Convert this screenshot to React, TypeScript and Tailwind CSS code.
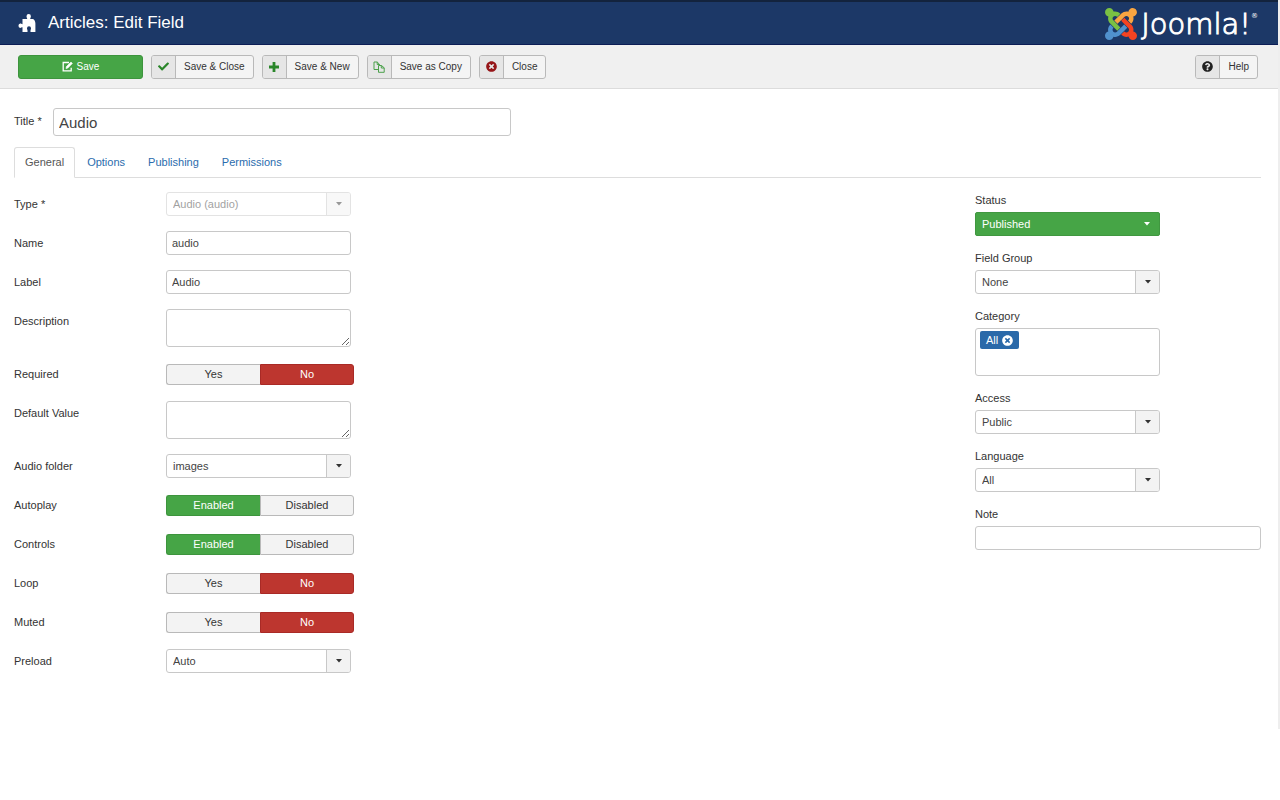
import React, { useState } from 'react';
import { FaCheck, FaTimesCircle, FaQuestionCircle } from 'react-icons/fa';

const PuzzleIcon = () => (
  <svg width="18" height="18" viewBox="0 0 18 18" fill="currentColor" aria-hidden="true">
    <path d="M4.500 5h4.700C9.200 4 8.500 3.600 8.500 2.300a2.200 2.200 0 0 1 4.400 0c0 1.300-.7 1.700-.7 2.700h2.500c1 0 1.500.8 1.900 1.600.5.900.8 1.800.8 3V18h-4.900v-1.400c0-.9.500-1.300.5-2.300a2 2 0 0 0-4 0c0 1 .5 1.400.5 2.300V18h-5v-4.800c-1.100 0-1.300.7-2.300.7a2.200 2.200 0 0 1 0-4.300c1 0 1.200.6 2.300.6z" />
  </svg>
);

const EditIcon = () => (
  <svg width="11" height="11" viewBox="0 0 11 11" fill="none" stroke="currentColor" aria-hidden="true">
    <path d="M7 1.500H1.200v8.300h8V6.800" strokeWidth="1.300" />
    <path d="M4 7.600l.4-2L9 1l1.400 1.400-4.600 4.700z" fill="currentColor" strokeWidth=".6" />
  </svg>
);

const PlusIcon = () => (
  <svg width="10" height="10" viewBox="0 0 10 10" fill="currentColor" aria-hidden="true">
    <path d="M3.600 0h2.800v3.600H10v2.800H6.400V10H3.600V6.400H0V3.600h3.600z" />
  </svg>
);

const CopyIcon = () => (
  <svg width="12" height="12" viewBox="0 0 12 12" fill="none" stroke="currentColor" aria-hidden="true">
    <path d="M5 8.500H1V1h3.200l2.300 2.300v1.200M4.200 1v2.500h2.300" />
    <path d="M5.500 4.500h3l2.700 2.300v4.500H5.500zM8.300 4.500v2.500h2.900" />
  </svg>
);

const JoomlaMark = () => (
  <svg width="32" height="32" viewBox="0 32 448 448" aria-hidden="true">
    <path fill="#7ac143" d="M.6 92.100C.6 58.800 27.400 32 60.400 32c30 0 54.500 21.900 59.200 50.200 32.600-7.600 67.100.6 96.500 30l-44.300 44.300c-20.500-20.500-42.600-16.300-55.400-3.500-14.300 14.300-14.300 37.900 0 52.200l99.500 99.500-44 44.300c-87.700-87.200-49.700-49.700-99.800-99.700-26.800-26.500-35-64.800-24.800-98.900C20.400 144.600.6 120.700.6 92.100z" />
    <path fill="#f9a541" d="M130.100 208.500l44.300 44.300c10-10 89.700-89.700 99.700-99.800 14.300-14.300 37.600-14.300 51.900 0 12.800 12.800 17 35-3.500 55.400l44 44.300c31.200-31.200 38.500-67.600 28.900-101.200 29.200-4.100 51.900-29.200 51.900-59.500 0-33.200-26.800-60.100-59.800-60.100-30.300 0-55.400 22.500-59.500 51.600-33.800-9.900-71.700-1.500-98.300 25.100-18.300 19.100-71.100 71.500-99.600 99.900z" />
    <path fill="#f44321" d="M396.400 360.700c8.200-32.700-.9-68.500-26.300-93.900-11.800-12.200 5 4.700-99.500-99.700l-44.300 44.300 99.700 99.700c14.300 14.300 14.300 37.600 0 51.900-12.800 12.800-35 17-55.400-3.500l-44 44.300c27.600 30.200 68 38.800 102.700 28 5.500 27.400 29.700 48.100 58.900 48.100 33 0 59.800-26.800 59.800-60.100 0-30.200-22.500-55-51.600-59.100z" />
    <path fill="#5091cd" d="M312.100 307.600l-44-44.300c-87 86.400-50.400 50.400-99.700 99.800-14.300 14.300-37.600 14.300-51.900 0-13.100-13.400-16.900-35.300 3.200-55.400l-44-44.300c-30.200 30.200-38 65.200-29.500 98.300-26.700 6-46.200 29.900-46.200 58.200C0 453.200 26.800 480 59.800 480c28.600 0 52.500-19.800 58.600-46.700 32.700 8.200 68.500-.6 94.200-26 32.100-32 12.200-12.400 99.500-99.700z" />
  </svg>
);

const Caret = () => (
  <svg width="8" height="4" viewBox="0 0 8 4" fill="currentColor" aria-hidden="true">
    <path d="M1 0h6L4 3.500z" />
  </svg>
);

const ToolbarButton = ({ icon, children }) => (
  <button type="button" className="flex h-6 overflow-hidden rounded-[3px] border border-[#b9b9b9] bg-[#f4f4f4] text-[10px] text-[#333]">
    <span className="flex h-full w-6 items-center justify-center border-r border-[#b9b9b9] bg-[#e6e6e6]">{icon}</span>
    <span className="px-2 leading-[22px]">{children}</span>
  </button>
);

const SelectBox = ({ id, options, disabled = false, green = false }) => (
  <div className={`relative w-[185px] ${disabled ? 'opacity-50' : ''}`}>
    <select
      id={id}
      disabled={disabled}
      className={`block h-6 w-full appearance-none border pr-7 pl-1.5 focus:outline-none ${green ? 'rounded-[2px] border-[#409740] bg-[#46a546] text-white' : 'rounded-[3px] border-[#c8c8c8] bg-white text-[#444]'}`}
    >
      {options.map((option) => (
        <option key={option}>{option}</option>
      ))}
    </select>
    <span
      className={`pointer-events-none absolute inset-y-px right-px flex w-6 items-center justify-center ${green ? 'text-white' : 'rounded-r-[2px] border-l border-[#c8c8c8] bg-[#f3f3f3] text-[#333]'}`}
    >
      <Caret />
    </span>
  </div>
);

const Toggle = ({ name, options, initial }) => {
  const [value, setValue] = useState(initial);

  const getStyle = (index) => {
    if (value !== index) return 'border-[#b9b9b9] bg-[#f3f3f3] text-[#333]';
    return index === 0 ? 'border-[#3d943d] bg-[#46a546] text-white' : 'border-[#a92a26] bg-[#bd362f] text-white';
  };

  return (
    <div role="radiogroup" aria-labelledby={`${name}-label`} className="flex h-6 w-[188px] items-center">
      {options.map((option, index) => (
        <label
          key={option}
          className={`relative h-[21px] w-1/2 cursor-pointer border text-center leading-[19px] ${index === 0 ? 'rounded-l-[3px] border-r-0' : 'rounded-r-[3px]'} ${getStyle(index)}`}
        >
          <input
            type="radio"
            name={name}
            checked={value === index}
            onChange={() => setValue(index)}
            className="sr-only"
          />
          {option}
        </label>
      ))}
    </div>
  );
};

const inputClass = 'block h-6 rounded-[3px] border border-[#c8c8c8] bg-white px-[5px] text-[#444] focus:outline-none';
const textareaClass = 'block h-[38px] w-[185px] rounded-[3px] border border-[#c8c8c8] bg-white px-[5px] text-[#444] focus:outline-none';

const yesNo = ['Yes', 'No'];
const enabledDisabled = ['Enabled', 'Disabled'];

const fields = [
  { id: 'type', label: 'Type *', control: <SelectBox id="type" options={['Audio (audio)']} disabled /> },
  { id: 'name', label: 'Name', control: <input id="name" type="text" defaultValue="audio" className={`${inputClass} w-[185px]`} /> },
  { id: 'label', label: 'Label', control: <input id="label" type="text" defaultValue="Audio" className={`${inputClass} w-[185px]`} /> },
  { id: 'description', label: 'Description', control: <textarea id="description" className={textareaClass} /> },
  { id: 'required', label: 'Required', group: true, control: <Toggle name="required" options={yesNo} initial={1} /> },
  { id: 'default', label: 'Default Value', control: <textarea id="default" className={textareaClass} /> },
  { id: 'folder', label: 'Audio folder', control: <SelectBox id="folder" options={['images']} /> },
  { id: 'autoplay', label: 'Autoplay', group: true, control: <Toggle name="autoplay" options={enabledDisabled} initial={0} /> },
  { id: 'controls', label: 'Controls', group: true, control: <Toggle name="controls" options={enabledDisabled} initial={0} /> },
  { id: 'loop', label: 'Loop', group: true, control: <Toggle name="loop" options={yesNo} initial={1} /> },
  { id: 'muted', label: 'Muted', group: true, control: <Toggle name="muted" options={yesNo} initial={1} /> },
  { id: 'preload', label: 'Preload', control: <SelectBox id="preload" options={['Auto', 'Metadata', 'None']} /> },
];

const tabs = ['General', 'Options', 'Publishing', 'Permissions'];

const SideField = ({ id, label, children }) => (
  <div>
    <label htmlFor={id} className="block leading-6">{label}</label>
    {children}
  </div>
);

const App = () => {
  const [activeTab, setActiveTab] = useState('General');
  const [categories, setCategories] = useState(['All']);

  return (
    <div className="border-r-2 border-[#eee] bg-white font-['Liberation_Sans',Arial,sans-serif] text-[11px] text-[#333]">
      <header className="flex h-[45px] items-center justify-between border-t-2 border-b border-t-[#13233d] border-b-[#0c1d55] bg-[#1c3867] pt-0.5 pr-5 pl-[18px] text-white">
        <h1 className="flex items-center gap-3 pb-0.5 text-[17px] leading-5">
          <PuzzleIcon />
          Articles: Edit Field
        </h1>
        <div className="flex items-center gap-1">
          <JoomlaMark />
          <span className="flex font-['DejaVu_Sans',sans-serif] text-[29px] leading-8 font-extralight [-webkit-text-stroke:1px_currentColor]">
            Joomla!
            <span className="text-[7px] leading-4 font-normal [-webkit-text-stroke:0]">®</span>
          </span>
        </div>
      </header>

      <div className="flex h-11 items-center justify-between border-b border-[#dcdcdc] bg-[#f0f0f0] pr-5 pl-[18px]">
        <div className="flex gap-2">
          <button type="button" className="flex h-6 w-[125px] items-center justify-center gap-1 rounded-[3px] border border-[#3d943d] bg-[#46a546] text-[10px] text-white">
            <EditIcon />
            Save
          </button>
          <ToolbarButton icon={<FaCheck className="text-[#2a862a]" size={11} />}>Save &amp; Close</ToolbarButton>
          <ToolbarButton icon={<span className="text-[#2a862a]"><PlusIcon /></span>}>Save &amp; New</ToolbarButton>
          <ToolbarButton icon={<span className="text-[#4ba04b]"><CopyIcon /></span>}>Save as Copy</ToolbarButton>
          <ToolbarButton icon={<FaTimesCircle className="text-[#961518]" size={11} />}>Close</ToolbarButton>
        </div>
        <ToolbarButton icon={<FaQuestionCircle className="text-[#222]" size={11} />}>Help</ToolbarButton>
      </div>

      <main className="pt-[19px] pr-[17px] pb-14 pl-[14px]">
        <div className="flex">
          <label htmlFor="title" className="w-[39px] leading-[26px]">Title *</label>
          <input
            id="title"
            type="text"
            defaultValue="Audio"
            className="h-7 w-[458px] rounded-[3px] border border-[#c8c8c8] px-[5px] text-[15px] text-[#444] focus:outline-none"
          />
        </div>

        <div role="tablist" className="mt-[11px] flex gap-px border-b border-[#ddd]">
          {tabs.map((tab) => (
            <button
              key={tab}
              type="button"
              role="tab"
              aria-selected={activeTab === tab}
              onClick={() => setActiveTab(tab)}
              className={`-mb-px h-[31px] rounded-t-[3px] border px-[10px] ${activeTab === tab ? 'border-[#ddd] border-b-white bg-white text-[#555]' : 'border-transparent text-[#2a6cad]'}`}
            >
              {tab}
            </button>
          ))}
        </div>

        <div className="flex items-start justify-between">
          <div className="mt-[14px] flex flex-col gap-[15px]">
            {fields.map((field) => (
              <div key={field.id} className="flex">
                {field.group ? (
                  <span id={`${field.id}-label`} className="w-[152px] leading-6">{field.label}</span>
                ) : (
                  <label htmlFor={field.id} className="w-[152px] leading-6">{field.label}</label>
                )}
                {field.control}
              </div>
            ))}
          </div>

          <div className="mt-[10px] flex w-[286px] flex-col gap-[10px]">
            <SideField id="status" label="Status">
              <SelectBox id="status" options={['Published', 'Unpublished', 'Archived', 'Trashed']} green />
            </SideField>
            <SideField id="group" label="Field Group">
              <SelectBox id="group" options={['None']} />
            </SideField>
            <SideField id="category" label="Category">
              <div className="flex h-12 w-[185px] items-start rounded-[3px] border border-[#c8c8c8] px-1 py-0.5">
                {categories.map((category) => (
                  <span key={category} className="flex h-[18px] items-center gap-1 rounded-[2px] bg-[#2a69a9] px-1.5 text-white">
                    {category}
                    <button
                      type="button"
                      aria-label={`Remove ${category}`}
                      onClick={() => setCategories(categories.filter((item) => item !== category))}
                    >
                      <FaTimesCircle size={11} />
                    </button>
                  </span>
                ))}
                <input id="category" type="text" className="h-[18px] min-w-0 flex-1 px-1 focus:outline-none" />
              </div>
            </SideField>
            <SideField id="access" label="Access">
              <SelectBox id="access" options={['Public', 'Guest', 'Registered', 'Special']} />
            </SideField>
            <SideField id="language" label="Language">
              <SelectBox id="language" options={['All', 'English (en-GB)']} />
            </SideField>
            <SideField id="note" label="Note">
              <input id="note" type="text" className={`${inputClass} w-full`} />
            </SideField>
          </div>
        </div>
      </main>
    </div>
  );
};

export default App;
